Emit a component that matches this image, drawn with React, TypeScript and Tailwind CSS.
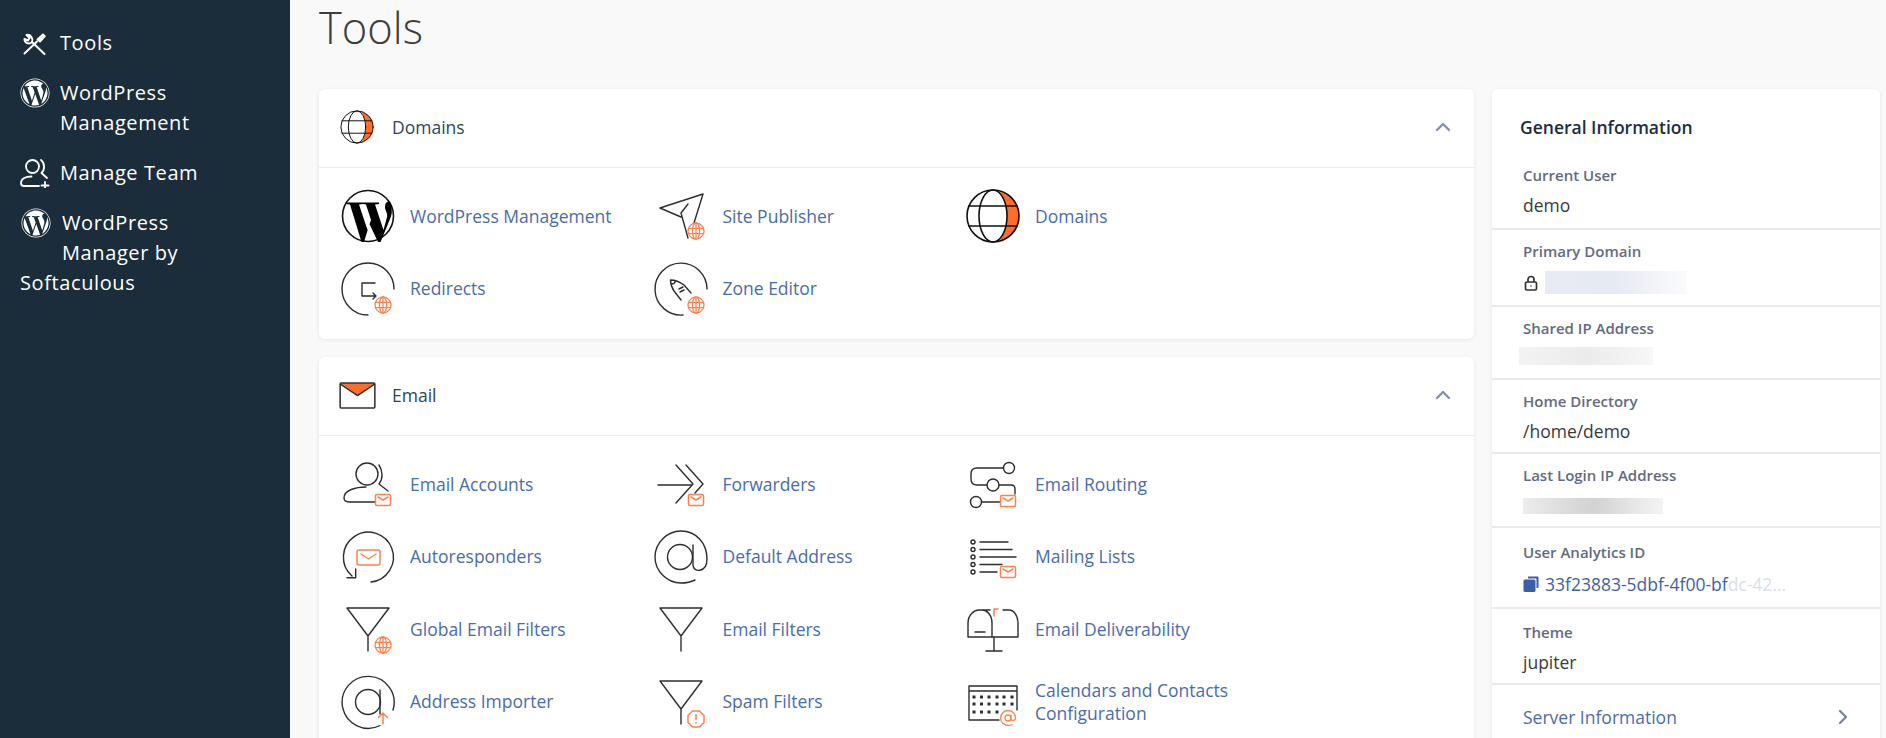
import type { ReactNode } from "react";
import { ChevronRight, ChevronUp } from "lucide-react";
import { FaWordpress } from "react-icons/fa";

const ink = "#2e2e2e";
const orange = "#fc8350";

function GlobeBadge({ x = 45, y = 46 }: { x?: number; y?: number }) {
    return (
        <g transform={`translate(${x} ${y})`} fill="none" stroke={orange} strokeWidth="1.3">
            <circle r="8" fill="#fff" />
            <ellipse rx="3.6" ry="8" />
            <path d="M-7.5 -2.6H7.5M-7.5 2.6H7.5M0 -8V8" />
        </g>
    );
}

function MailBadge({ x = 45, y = 46 }: { x?: number; y?: number }) {
    return (
        <g transform={`translate(${x} ${y})`} fill="none" stroke={orange} strokeWidth="1.5" strokeLinejoin="round">
            <rect x="-7.5" y="-5.5" width="15" height="11" rx="1.5" fill="#fff" />
            <path d="M-5 -3L0 0L5 -3" />
        </g>
    );
}

function Svg({ children }: { children: ReactNode }) {
    return (
        <svg viewBox="0 0 60 60" className="w-[60px] h-[60px] shrink-0" fill="none" stroke={ink} strokeWidth="1.4" strokeLinecap="round" strokeLinejoin="round">
            {children}
        </svg>
    );
}

const Filter = () => <path d="M9 9H51L30 37ZM30 37V52" />;

const icons: Record<string, ReactNode> = {
    wordpress: (
        <Svg>
            <circle cx="30" cy="30" r="25.5" stroke="#111" strokeWidth="1.6" />
            <path
                d="M8.5 16.5H25V18L21 18.5L29.5 44L33 34L28 18.5L25 18V16.5H41V18L37 18.5L45.5 44L49 31C50 27 47 25 47 21C47 18 48.5 15 51.5 15.5C54 20 55 27 52 33L42.5 56H40L31.5 38L26 56H23.5L12 18.5L8.500 18Z"
                fill="#000"
                stroke="none"
            />
        </Svg>
    ),
    publisher: (
        <Svg>
            <path d="M52 8L9 22L30 31M52 8L43 37M37 18L30 27L37 52" />
            <GlobeBadge y={45} />
        </Svg>
    ),
    domains: (
        <Svg>
            <path d="M36 4.600C45 7 56 14 56 30C56 46 45 53 36 55.400C42 48 44 38 44 30C44 22 42 12 36 4.600Z" fill="#ff6c2c" stroke="none" />
            <circle cx="30" cy="30" r="26" stroke="#111" strokeWidth="1.6" />
            <ellipse cx="30" cy="30" rx="14" ry="26" stroke="#111" strokeWidth="1.6" />
            <path d="M6 20H54M6 40H54" stroke="#111" strokeWidth="1.6" />
        </Svg>
    ),
    redirects: (
        <Svg>
            <path d="M30 56A26 26 0 1 1 56 30" />
            <path d="M37 24H24V37H38M35 34L38 37L35 40" />
            <GlobeBadge />
        </Svg>
    ),
    zone: (
        <Svg>
            <path d="M32 56A26 26 0 1 1 56 30" />
            <path d="M40 34L33 26C29 23 24 21 19.500 21C19.500 25 21 29 23 32L30 41M21 25C23 25 24 23.500 24.500 22" />
            <path d="M28 30L32 28M29 33L33 31" />
            <GlobeBadge />
        </Svg>
    ),
    accounts: (
        <Svg>
            <circle cx="29" cy="20" r="11" />
            <path d="M41 11C45 17 45 25 41 30L50 37M28 33C18 33 6 36 6 44C6 47 9 48 12 48H37" />
            <MailBadge />
        </Svg>
    ),
    forwarders: (
        <Svg>
            <path d="M7 31H40M25 11L42 30L25 49M35 11L52 30L44 39" />
            <MailBadge />
        </Svg>
    ),
    routing: (
        <Svg>
            <circle cx="46" cy="14" r="5.500" />
            <circle cx="30" cy="31" r="6" />
            <circle cx="13" cy="48" r="5.500" />
            <path d="M40 14H14Q8 14 8 20V25Q8 31 14 31H24M36 31H48Q52 31 52 35V40M19 48H37" />
            <MailBadge y={47} />
        </Svg>
    ),
    autoresponders: (
        <Svg>
            <path d="M33 55A25 25 0 1 0 14 49M9 50.700H17.700V42" />
            <rect x="19" y="23" width="23" height="15" rx="2" stroke={orange} strokeWidth="1.500" />
            <path d="M23 27L30.500 32L38 27" stroke={orange} strokeWidth="1.500" />
        </Svg>
    ),
    at: (
        <Svg>
            <circle cx="29" cy="30" r="12.500" />
            <path d="M42 18V38C42 46 56 46 56 32C56 16 45 4 30 4C16 4 4 16 4 30C4 44 16 56 30 56C35 56 40 55 44 53" />
        </Svg>
    ),
    lists: (
        <Svg>
            <circle cx="10" cy="15" r="2" />
            <circle cx="10" cy="22.500" r="2" />
            <circle cx="10" cy="30" r="2" />
            <circle cx="10" cy="37.500" r="2" />
            <circle cx="10" cy="45" r="2" />
            <path d="M17 15H45M17 22.500H49M17 30H53M17 37.500H39M17 45H34" />
            <MailBadge y={45} />
        </Svg>
    ),
    globalFilter: (
        <Svg>
            <Filter />
            <GlobeBadge />
        </Svg>
    ),
    filter: (
        <Svg>
            <Filter />
        </Svg>
    ),
    deliverability: (
        <Svg>
            <path d="M5 38H55M5 38V24C5 16 11 11 16 11H19C24 11 29 16 29 24V38M20 11H27M40 11H46C51 11 55 17 55 24V38M31 38V52M23 52H39M12 33H22" />
            <path d="M31 17V10H35" stroke={orange} strokeWidth="1.500" />
        </Svg>
    ),
    importer: (
        <Svg>
            <circle cx="30" cy="30" r="12.500" />
            <path d="M42 18V42M42 53.500A26 26 0 1 1 55 38" />
            <path d="M45 52V41M40.500 45.500L45 41L49.500 45.500" stroke={orange} strokeWidth="1.500" />
        </Svg>
    ),
    spam: (
        <Svg>
            <Filter />
            <path d="M41.500 39H48.500L53 43.500V50.500L48.500 55H41.500L37 50.500V43.500Z" fill="#fff" stroke={orange} strokeWidth="1.500" />
            <path d="M45 42.500V47.500M45 50.500V51" stroke={orange} strokeWidth="1.500" />
        </Svg>
    ),
    calendar: (
        <Svg>
            <path d="M54 38V14H6V48H36M6 19H54" />
            {[11, 18.500, 26, 34, 41, 49].map((x) => (
                <g key={x} fill={ink} stroke="none">
                    <rect x={x - 1.500} y="23.500" width="3" height="3" />
                    <rect x={x - 1.500} y="30.500" width="3" height="3" />
                    {x < 36 && <rect x={x - 1.500} y="38.500" width="3" height="3" />}
                </g>
            ))}
            <g fill="none" stroke={orange} strokeWidth="1.300">
                <circle cx="45" cy="46" r="8.500" fill="#fff" stroke="none" />
                <circle cx="45" cy="46" r="3" />
                <path d="M48 43.500V47C48 49 52.500 49 52.500 46C52.500 41.500 49 38.500 45 38.500C41 38.500 37.500 42 37.500 46C37.500 50 41 53.500 45 53.500C46.500 53.500 48 53 49 52.500" />
            </g>
        </Svg>
    ),
};

const domainItems = [
    { label: "WordPress Management", icon: "wordpress" },
    { label: "Site Publisher", icon: "publisher" },
    { label: "Domains", icon: "domains" },
    { label: "Redirects", icon: "redirects" },
    { label: "Zone Editor", icon: "zone" },
];

const emailItems = [
    { label: "Email Accounts", icon: "accounts" },
    { label: "Forwarders", icon: "forwarders" },
    { label: "Email Routing", icon: "routing" },
    { label: "Autoresponders", icon: "autoresponders" },
    { label: "Default Address", icon: "at" },
    { label: "Mailing Lists", icon: "lists" },
    { label: "Global Email Filters", icon: "globalFilter" },
    { label: "Email Filters", icon: "filter" },
    { label: "Email Deliverability", icon: "deliverability" },
    { label: "Address Importer", icon: "importer" },
    { label: "Spam Filters", icon: "spam" },
    { label: "Calendars and Contacts Configuration", icon: "calendar" },
];

function Section({ title, icon, items }: { title: string; icon: ReactNode; items: { label: string; icon: string }[] }) {
    return (
        <section className="bg-white rounded-md shadow-[0_1px_4px_rgba(0,0,0,0.08)]">
            <header className="h-[79px] pl-[18px] pr-[19px] pb-[2px] flex items-center border-b border-[#e8ebf2]">
                <div className="w-[40px] h-[40px] flex items-center justify-center">{icon}</div>
                <h2 className="ml-[15px] text-[17.500px] text-[#2c4661]">{title}</h2>
                <ChevronUp className="ml-auto w-[24px] h-[24px] text-[#8592a8]" strokeWidth={2.4} />
            </header>
            <div className="pl-[19px] pt-[12px] pb-[14px] grid grid-cols-[repeat(3,312.500px)]">
                {items.map((item) => (
                    <a key={item.label} className="h-[72.500px] flex items-center gap-[12px]">
                        {icons[item.icon]}
                        <span className="max-w-[220px] text-[17.500px] leading-[23px] text-[#4a6cae]">{item.label}</span>
                    </a>
                ))}
            </div>
        </section>
    );
}

function InfoRow({ label, className, children }: { label: string; className: string; children: ReactNode }) {
    return (
        <div className={`border-b-2 border-[#eaeaea] pl-[31px] pt-[11px] ${className}`}>
            <p className="text-[15px] leading-[20px] font-semibold text-[#646b80]">{label}</p>
            {children}
        </div>
    );
}

function SideLabel({ children }: { children: ReactNode }) {
    return <span className="text-[20px] leading-[30px] tracking-[0.6px]">{children}</span>;
}

export default function App() {
    return (
        <div className="flex h-[738px] w-[1886px] overflow-hidden bg-[#f9f9f9] [font-family:'Open_Sans',sans-serif]">
            <aside className="w-[290px] shrink-0 bg-[#1b2c3a] text-white pl-[20px] pt-[28px] flex flex-col gap-[20px]">
                <div className="flex gap-[10px]">
                    <svg viewBox="0 0 30 30" className="w-[30px] h-[30px]" fill="none" stroke="#fff" strokeWidth="2" strokeLinecap="round" strokeLinejoin="round">
                        <path d="M4.500 25.500L17 13.500" />
                        <path d="M17.500 11.500L23 6.500L24.800 8.200L20 13.500Z" fill="#fff" />
                        <path d="M24.500 26L12 14M12 14C13.500 10.500 10.500 6 6.500 7L9.500 10L8 12.500L4.500 11C4.500 15 9 17 12 14Z" />
                    </svg>
                    <SideLabel>Tools</SideLabel>
                </div>
                <div className="flex gap-[10px]">
                    <FaWordpress className="w-[30px] h-[30px] shrink-0 text-white" />
                    <div className="flex flex-col">
                        <SideLabel>WordPress</SideLabel>
                        <SideLabel>Management</SideLabel>
                    </div>
                </div>
                <div className="flex gap-[10px]">
                    <svg viewBox="0 0 30 30" className="w-[30px] h-[30px] shrink-0" fill="none" stroke="#fff" strokeWidth="1.800" strokeLinecap="round" strokeLinejoin="round">
                        <circle cx="12.500" cy="8.500" r="6.500" />
                        <path d="M21 2C25 5 25 12 21.500 15L27 20M11.500 18.500C6 18.500 1 20.500 1 25C1 27 2 28 4 28H19M25 24V31M21.500 27.500H28.500" />
                    </svg>
                    <SideLabel>Manage Team</SideLabel>
                </div>
                <div className="flex flex-col">
                    <div className="flex gap-[11px] pl-[1px]">
                        <FaWordpress className="w-[30px] h-[30px] shrink-0 text-white" />
                        <div className="flex flex-col">
                            <SideLabel>WordPress</SideLabel>
                            <SideLabel>Manager by</SideLabel>
                        </div>
                    </div>
                    <SideLabel>Softaculous</SideLabel>
                </div>
            </aside>

            <main className="flex-1 pl-[29px] pr-[6px]">
                <h1 className="h-[89px] pt-[2px] text-[43.500px] leading-[52px] font-light text-[#3d3d3d]">Tools</h1>
                <div className="flex gap-[18px]">
                    <div className="w-[1155px] flex flex-col gap-[18px]">
                        <Section title="Domains" items={domainItems} icon={<div className="scale-[0.62]">{icons.domains}</div>} />
                        <Section
                            title="Email"
                            items={emailItems}
                            icon={
                                <svg viewBox="0 0 38 28" className="w-[37px] h-[27px]" fill="none" stroke="#333" strokeWidth="1.600" strokeLinejoin="round">
                                    <path d="M1 1H37L19 13Z" fill="#ff6c2c" stroke="none" />
                                    <rect x="1" y="1" width="36" height="26" rx="1" />
                                    <path d="M1 2L19 14L37 2" />
                                </svg>
                            }
                        />
                    </div>

                    <aside className="w-[388px] h-[700px] bg-white rounded-md shadow-[0_1px_4px_rgba(0,0,0,0.08)]">
                        <div className="h-[141px] border-b-2 border-[#eaeaea] pl-[28px] pt-[26px]">
                            <h3 className="text-[17.500px] leading-[24px] font-semibold text-[#1c2d3f]">General Information</h3>
                            <p className="mt-[26px] pl-[3px] text-[15px] leading-[20px] font-semibold text-[#646b80]">Current User</p>
                            <p className="mt-[8px] pl-[3px] text-[17.500px] leading-[24px] text-[#3a3a3a]">demo</p>
                        </div>
                        <InfoRow label="Primary Domain" className="h-[77px] pt-[9px]">
                            <div className="mt-[10px] flex items-center">
                                <svg viewBox="0 0 16 16" className="w-[16px] h-[16px] shrink-0" fill="none" stroke="#333" strokeWidth="1.700">
                                    <rect x="2.500" y="7" width="11" height="8" rx="1.500" />
                                    <path d="M5 7V4.500A3 3 0 0 1 11 4.500V7" />
                                    <circle cx="8" cy="11" r="0.800" fill="#333" stroke="none" />
                                </svg>
                                <div className="ml-[6px] w-[142px] h-[23px] bg-gradient-to-r from-[#e8ebf3] via-[#e6eaf2] to-[#fbfbfd]" />
                            </div>
                        </InfoRow>
                        <InfoRow label="Shared IP Address" className="h-[73px]">
                            <div className="mt-[9px] -ml-[4px] w-[134px] h-[18px] bg-gradient-to-r from-[#f3f3f3] via-[#ebebeb] to-[#f7f7f7]" />
                        </InfoRow>
                        <InfoRow label="Home Directory" className="h-[74px]">
                            <p className="mt-[8px] text-[17.500px] leading-[24px] text-[#3a3a3a]">/home/demo</p>
                        </InfoRow>
                        <InfoRow label="Last Login IP Address" className="h-[74px]">
                            <div className="mt-[13px] w-[140px] h-[16px] bg-gradient-to-r from-[#ececec] via-[#d2d2d2] to-[#f4f4f4]" />
                        </InfoRow>
                        <InfoRow label="User Analytics ID" className="h-[81px] pt-[14px]">
                            <div className="mt-[10px] flex items-center">
                                <svg viewBox="0 0 16 16" className="w-[16px] h-[16px] shrink-0">
                                    <path d="M5 0.500H14.500A1 1 0 0 1 15.500 1.500V11A1 1 0 0 1 14.500 12H13.500V3.500A1 1 0 0 0 12.500 2.500H5Z" fill="#3a5ea8" />
                                    <rect x="0.500" y="3.500" width="12" height="12.500" rx="1.500" fill="#3a5ea8" />
                                </svg>
                                <span className="ml-[6px] text-[17.500px] leading-[24px] text-[#3f62a5] whitespace-nowrap">
                                    33f23883-5dbf-4f00-bf<span className="text-[#d7deea]">dc-42...</span>
                                </span>
                            </div>
                        </InfoRow>
                        <InfoRow label="Theme" className="h-[76px] pt-[13px]">
                            <p className="mt-[8px] text-[17.500px] leading-[24px] text-[#3a3a3a]">jupiter</p>
                        </InfoRow>
                        <div className="h-[64px] pl-[31px] pr-[25px] flex items-center">
                            <span className="text-[17.500px] text-[#4a6cae]">Server Information</span>
                            <ChevronRight className="ml-auto w-[24px] h-[24px] text-[#7b869b]" strokeWidth={2.400} />
                        </div>
                    </aside>
                </div>
            </main>
        </div>
    );
}
